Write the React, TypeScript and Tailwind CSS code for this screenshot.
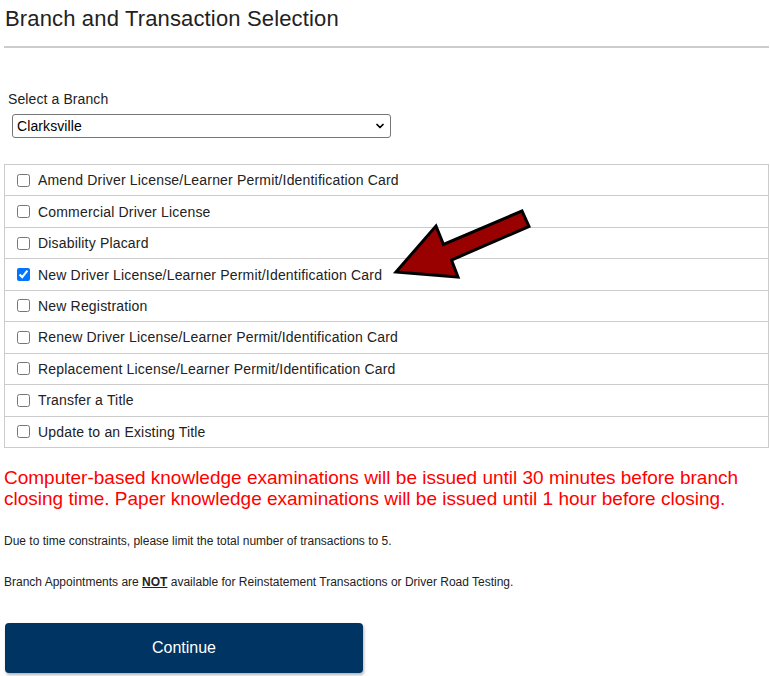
import { ChevronDown } from "lucide-react";

const transactions = [
  { label: "Amend Driver License/Learner Permit/Identification Card", checked: false },
  { label: "Commercial Driver License", checked: false },
  { label: "Disability Placard", checked: false },
  { label: "New Driver License/Learner Permit/Identification Card", checked: true },
  { label: "New Registration", checked: false },
  { label: "Renew Driver License/Learner Permit/Identification Card", checked: false },
  { label: "Replacement License/Learner Permit/Identification Card", checked: false },
  { label: "Transfer a Title", checked: false },
  { label: "Update to an Existing Title", checked: false },
];

const Arrow = () => (
  <svg
    className="absolute left-[385px] top-[200px] pointer-events-none"
    width="155"
    height="85"
    viewBox="385 200 155 85"
  >
    <polygon
      points="396,272 436,226 443.5,244.5 522,211 529,226.5 451.5,260 458,277"
      fill="#990000"
      stroke="#000"
      strokeWidth="3"
      strokeLinejoin="miter"
    />
  </svg>
);

const App = () => {
  return (
    <div className="relative w-[770px] h-[676px] bg-white overflow-hidden text-[#222] font-['Liberation_Sans',Arial,sans-serif]">
      <div className="ml-[4px] w-[765px]">
        <h1 className="text-[22px] leading-[24px] mt-[7px] ml-[1px] font-normal tracking-[0.15px]">
          Branch and Transaction Selection
        </h1>
        <div className="mt-[15px] h-[2px] bg-[#cccccc]" />

        <label className="block ml-[4px] mt-[43px] text-[14px] leading-[16px] tracking-[0.1px]">
          Select a Branch
        </label>
        <div className="relative ml-[8px] mt-[7px] w-[379px]">
          <select
            defaultValue="Clarksville"
            className="appearance-none block w-full h-[24px] border border-[#767676] rounded-[3px] pl-[4px] text-[14px] leading-[20px] tracking-[0.1px] bg-white text-black"
          >
            <option>Clarksville</option>
          </select>
          <ChevronDown
            className="absolute right-[5px] top-[6px] w-[12px] h-[12px] text-black pointer-events-none"
            strokeWidth={3.5}
          />
        </div>

        <div className="mt-[26px] border border-[#cccccc] border-b-0">
          {transactions.map((t) => (
            <label
              key={t.label}
              className="flex items-center h-[31.44px] border-b border-[#cccccc] pl-[12px] text-[14px] leading-[16px] tracking-[0.18px]"
            >
              <input
                type="checkbox"
                defaultChecked={t.checked}
                className="w-[13px] h-[13px] mr-[8px] shrink-0 accent-[#0075ff]"
              />
              <span>{t.label}</span>
            </label>
          ))}
        </div>

        <p className="mt-[19px] text-[19px] leading-[21px] text-[#ff0000]">
          Computer-based knowledge examinations will be issued until 30 minutes before branch
          closing time. Paper knowledge examinations will be issued until 1 hour before closing.
        </p>

        <p className="mt-[25px] text-[12px] leading-[14px]">
          Due to time constraints, please limit the total number of transactions to 5.
        </p>
        <p className="mt-[27px] text-[12px] leading-[14px]">
          Branch Appointments are <strong className="font-bold underline">NOT</strong> available
          for Reinstatement Transactions or Driver Road Testing.
        </p>

        <button className="mt-[34px] ml-[1px] w-[358px] h-[50px] rounded-[4px] bg-[#003462] text-white text-[16px] shadow-[1px_2px_3px_rgba(0,0,0,0.3)]">
          Continue
        </button>
      </div>
      <Arrow />
    </div>
  );
};

export default App;
